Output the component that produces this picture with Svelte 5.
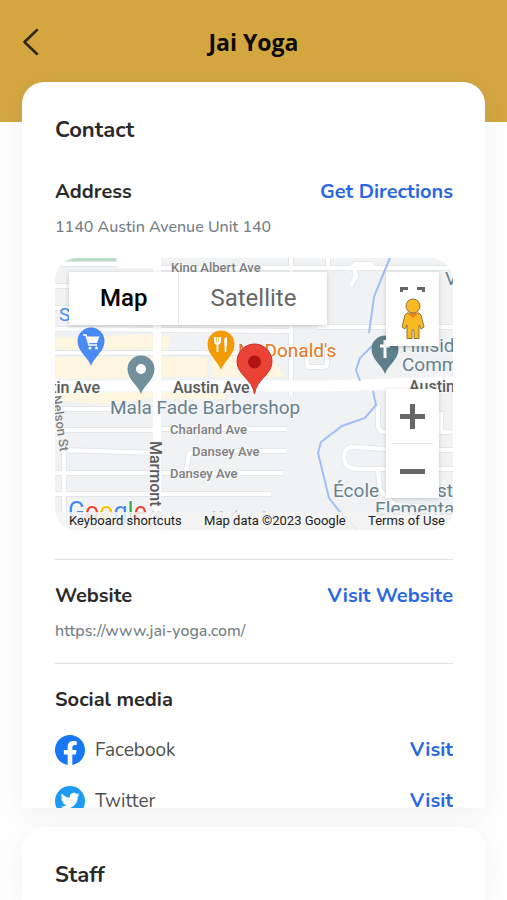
<script>
	const studio = {
		name: 'Jai Yoga',
		address: '1140 Austin Avenue Unit 140',
		website: 'https://www.jai-yoga.com/'
	};

	const socials = [
		{ id: 'facebook', label: 'Facebook', href: '#facebook' },
		{ id: 'twitter', label: 'Twitter', href: '#twitter' }
	];

	let mapType = $state('map');

	// Street geometry, in the map's own 398 x 272 space.
	const streets = [
		'M0 6H62',
		'M98 10H398',
		'M0 28H102',
		'M0 50H102',
		'M0 71L236 73',
		'M0 95H236',
		'M262 69H398',
		'M236 0V138',
		'M273 0V10',
		'M296 10L300 6H316L320 10M299 10L301 18L296 28',
		'M0 151H102',
		'M0 172H102',
		'M6 192L102 195',
		'M0 215H228',
		'M0 236H216',
		'M0 259H9',
		'M9 190V272',
		'M102 171H232',
		'M131 214L134 196L141 193H231',
		'M398 174H330Q323 174 323 166V148',
		'M350 174V156H386V174',
		'M398 211H304Q289 211 289 200Q289 188 300 189L345 192H398',
		'M323 212L325 232L340 247L398 250',
		'M252 92V106Q252 109 256 109H268Q272 109 272 106V91L266 88'
	];

	const blocks = [
		'M0 80L98 76V91H0z',
		'M0 99H98V119L0 121z',
		'M0 135L98 134V140L50 147L0 142z',
		'M106 99H152V119H106z',
		'M157 99H216L230 119H157z',
		'M106 134H170V141H106z',
		'M106 78H116L112 91H106z'
	];

	const river = [
		'M335 0L327 19L319 39L314 75',
		'M318 87L305 100L301 112L305 123',
		'M318 133L321 147L310 160L287 168L266 184L263 195L274 240L285 254L303 272'
	];
</script>

<header class="top-bar">
	<button class="back" type="button" aria-label="Back">
		<svg width="18" height="30" viewBox="0 0 18 30" aria-hidden="true">
			<path d="M15 3L2.5 15L15 27" />
		</svg>
	</button>
	<h1>{studio.name}</h1>
</header>

<main>
	<section class="card contact">
		<h2>Contact</h2>

		<div class="entry first">
			<div class="row">
				<h3>Address</h3>
				<a class="action" href="#directions">Get Directions</a>
			</div>
			<p>{studio.address}</p>

			<div class="map">
				<svg class="canvas" viewBox="0 0 398 272" preserveAspectRatio="xMidYMid slice">
					<rect width="398" height="272" fill="#f0f2f4" />
					<path d="M12 0H61V4H4zM101 0H105V4z" fill="#b9dfc4" />
					<g fill="#fff6e0">
						{#each blocks as d}
							<path {d} />
						{/each}
					</g>

					<g class="edge">
						{#each streets as d}
							<path {d} />
						{/each}
					</g>
					<g class="street">
						{#each streets as d}
							<path {d} />
						{/each}
					</g>
					<path d="M62 0H102V10H62z" fill="#fff" />
					<path d="M102 0V272" stroke="#fff" stroke-width="8" />
					<path d="M0 128L270 128L398 124" fill="none" stroke="#fff" stroke-width="11" />

					<g class="river">
						{#each river as d}
							<path {d} />
						{/each}
					</g>

					<g class="label small">
						<text x="116" y="14">King Albert Ave</text>
						<text x="115" y="176">Charland Ave</text>
						<text x="137" y="198">Dansey Ave</text>
						<text x="115" y="220">Dansey Ave</text>
						<text x="157" y="262" opacity="0.4">Madore Ave</text>
						<text transform="translate(-3 138) rotate(82)">Nelson St</text>
					</g>
					<g class="label main">
						<text x="118" y="135">Austin Ave</text>
						<text x="45" y="135" text-anchor="end">Austin Ave</text>
						<text x="354" y="134">Austin Ave</text>
						<text transform="translate(95 183) rotate(90)">Marmont <tspan opacity="0.4">St</tspan></text>
					</g>
					<g class="label place">
						<text x="55" y="156">Mala Fade Barbershop</text>
						<text x="347" y="94">Hillside</text>
						<text x="347" y="113">Community</text>
						<text x="278" y="239">École</text>
						<text x="398" y="239" text-anchor="end">Crest</text>
						<text x="320" y="257">Elementary</text>
						<text x="390" y="27">Va</text>
						<text x="183" y="99" fill="#e07a1f">McDonald's</text>
						<text x="4" y="63" fill="#4c8df6">S</text>
					</g>

					<!-- grocery -->
					<path d="M36 108C33 99 22.500 94 22.500 83A13.500 13.500 0 0 1 49.500 83C49.500 94 39 99 36 108z" fill="#4a8af4" />
					<path d="M28 77H31L34 87H42" fill="none" stroke="#fff" stroke-width="1.500" />
					<path d="M32 78.500H44.500L42 85H34z" fill="#fff" />
					<circle cx="35" cy="90" r="1.500" fill="#fff" />
					<circle cx="41.500" cy="90" r="1.500" fill="#fff" />

					<!-- barbershop -->
					<path d="M86 136C83 127 72.500 122 72.500 111A13.500 13.500 0 0 1 99.500 111C99.500 122 89 127 86 136z" fill="#71909c" />
					<circle cx="86" cy="111" r="5" fill="#fff" />

					<!-- restaurant -->
					<path d="M166 112C163 103 152.500 97 152.500 86A13.500 13.500 0 0 1 179.500 86C179.500 97 169 103 166 112z" fill="#f29a07" />
					<path d="M160 79V83Q160 86 162.500 86T165 83V79M162.500 79V94M170.500 94V80" fill="none" stroke="#fff" stroke-width="1.800" />
					<path d="M169.500 88V81Q170 79 172 79V88z" fill="#fff" />

					<!-- church -->
					<path d="M330 116C327 107 316.500 102 316.500 91A13.500 13.500 0 0 1 343.500 91C343.500 102 333 107 330 116z" fill="#5f7f8a" />
					<path d="M330 82V100M325 88H335" stroke="#fff" stroke-width="3" />

					<path
						d="M199.500 136C197.500 121 182 117 182 103.500A17.500 17.500 0 0 1 217 103.500C217 117 201.500 121 199.500 136z"
						fill="#ea4335"
						stroke="#c8372b"
					/>
					<circle cx="199.500" cy="104" r="6.500" fill="#b31412" />

					<text class="google" x="13" y="262"
						><tspan fill="#4285f4">G</tspan><tspan fill="#ea4335">o</tspan><tspan fill="#fbbc05">o</tspan><tspan
							fill="#4285f4">g</tspan
						><tspan fill="#34a853">l</tspan><tspan fill="#ea4335">e</tspan></text
					>
				</svg>

				<div class="map-types">
					<button type="button" class:active={mapType === 'map'} onclick={() => (mapType = 'map')}>Map</button>
					<button type="button" class:active={mapType === 'satellite'} onclick={() => (mapType = 'satellite')}>Satellite</button>
				</div>

				<div class="map-tools">
					<div class="tool-box">
						<button class="fullscreen" type="button" aria-label="Toggle fullscreen view">
							<svg width="25" height="5" viewBox="0 0 25 5" aria-hidden="true">
								<path d="M0 0H8V3H3V5H0zM17 0H25V5H22V3H17z" fill="#666" />
							</svg>
						</button>
						<button class="pegman" type="button" aria-label="Street View">
							<svg width="24" height="42" viewBox="0 0 24 42" aria-hidden="true">
								<g fill="#fbb921" stroke="#8c7440" stroke-width="1">
									<path d="M6 15H18L20 17L23 29L20 31L18 27V40.500H13V32H11V40.500H6V27L4 31L1 29L4 17z" />
									<path d="M6 15L12 20L18 15z" fill="#e8861c" stroke="none" />
									<circle cx="12" cy="8" r="7" />
								</g>
							</svg>
						</button>
					</div>
					<div class="tool-box">
						<button class="zoom" type="button" aria-label="Zoom in">
							<svg width="25" height="25" viewBox="0 0 25 25" aria-hidden="true">
								<path d="M0 12.500H25M12.500 0V25" />
							</svg>
						</button>
						<button class="zoom" type="button" aria-label="Zoom out">
							<svg width="25" height="25" viewBox="0 0 25 25" aria-hidden="true">
								<path d="M0 12.500H25" />
							</svg>
						</button>
					</div>
				</div>

				<div class="credits">
					<button type="button">Keyboard shortcuts</button>
					<span>Map data ©2023 Google</span>
					<a href="#terms">Terms of Use</a>
				</div>
			</div>
		</div>

		<div class="entry">
			<div class="row">
				<h3>Website</h3>
				<a class="action" href="#website">Visit Website</a>
			</div>
			<p>{studio.website}</p>
		</div>

		<div class="entry">
			<h3>Social media</h3>
			<ul>
				{#each socials as social (social.id)}
					<li>
						{#if social.id === 'facebook'}
							<svg width="30" height="30" viewBox="0 0 24 24" aria-hidden="true">
								<path
									fill="#1877f2"
									d="M24 12.073c0-6.627-5.373-12-12-12s-12 5.373-12 12c0 5.990 4.388 10.954 10.125 11.854v-8.385H7.078v-3.470h3.047V9.430c0-3.007 1.792-4.669 4.533-4.669 1.312 0 2.686.235 2.686.235v2.953H15.830c-1.491 0-1.956.925-1.956 1.874v2.250h3.328l-.532 3.470h-2.796v8.385C19.612 23.027 24 18.062 24 12.073z"
								/>
							</svg>
						{:else}
							<svg width="30" height="30" viewBox="0 0 30 30" aria-hidden="true">
								<circle cx="15" cy="15" r="15" fill="#1d9bf0" />
								<path
									transform="translate(5.500 5) scale(0.800)"
									fill="#fff"
									d="M23.953 4.570a10 10 0 01-2.825.775 4.958 4.958 0 002.163-2.723c-.951.555-2.005.959-3.127 1.184a4.920 4.920 0 00-8.384 4.482C7.690 8.095 4.067 6.130 1.640 3.162a4.822 4.822 0 00-.666 2.475c0 1.710.870 3.213 2.188 4.096a4.904 4.904 0 01-2.228-.616v.060a4.923 4.923 0 003.946 4.827 4.996 4.996 0 01-2.212.085 4.936 4.936 0 004.604 3.417 9.867 9.867 0 01-6.102 2.105c-.390 0-.779-.023-1.170-.067a13.995 13.995 0 007.557 2.209c9.053 0 13.998-7.496 13.998-13.985 0-.210 0-.420-.015-.630A9.935 9.935 0 0024 4.590z"
								/>
							</svg>
						{/if}
						<span class="network">{social.label}</span>
						<a class="action" href={social.href} aria-label="Visit {social.label}">Visit</a>
					</li>
				{/each}
			</ul>
		</div>
	</section>

	<section class="card staff">
		<h2>Staff</h2>
	</section>
</main>

<style>
	:global(body) {
		background: #fefefe;
		overflow-x: hidden;
	}

	h1,
	h2,
	h3,
	p,
	ul {
		margin: 0;
		padding: 0;
	}

	button {
		margin: 0;
		padding: 0;
		border: 0;
		background: none;
		font: inherit;
		color: inherit;
		cursor: pointer;
	}

	a {
		text-decoration: none;
	}

	.top-bar {
		display: grid;
		grid-template-columns: 32px 1fr 32px;
		align-items: center;
		box-sizing: border-box;
		height: 122px;
		padding: 0 22px 38px;
		background: #d3a640;
		font-family: 'Open Sans', sans-serif;
	}

	.top-bar h1 {
		font-size: 23px;
		line-height: 30px;
		font-weight: 700;
		text-align: center;
		color: #0c0a04;
	}

	.back {
		display: flex;
	}

	.back path {
		fill: none;
		stroke: #2f2715;
		stroke-width: 2.5;
		stroke-linecap: round;
		stroke-linejoin: round;
	}

	main {
		display: flex;
		flex-direction: column;
		gap: 19px;
		margin-top: -40px;
		padding: 0 22px;
		font-family: Nunito, 'Open Sans', sans-serif;
	}

	.card {
		padding: 34px 32px 0 33px;
		background: #fff;
		border-radius: 22px 22px 0 0;
		box-shadow: 0 6px 26px rgb(40 50 90 / 0.06);
	}

	.staff {
		padding-bottom: 11px;
	}

	h2 {
		font-size: 22px;
		line-height: 28px;
		font-weight: 700;
		color: #2a2a2a;
	}

	h3,
	.action {
		font-size: 20px;
		line-height: 28px;
		font-weight: 700;
		color: #2a2a2a;
	}

	.action {
		color: #2a67e2;
	}

	p {
		margin-top: 10px;
		font-size: 16px;
		line-height: 22px;
		font-weight: 500;
		color: #748085;
	}

	.entry {
		padding: 22px 0 21px;
		border-top: 1px solid #e0e0e0;
	}

	.entry.first {
		padding: 34px 0 29px;
		border-top: 0;
	}

	.row {
		display: flex;
		justify-content: space-between;
	}

	/* Map */
	.map {
		position: relative;
		height: 272px;
		margin-top: 20px;
		border-radius: 22px;
		overflow: hidden;
		font-family: Roboto, sans-serif;
	}

	.canvas {
		display: block;
		width: 100%;
		height: 100%;
	}

	.edge path {
		fill: none;
		stroke: #e4e7ea;
		stroke-width: 6;
	}

	.street path {
		fill: none;
		stroke: #fff;
		stroke-width: 4;
	}

	.river path {
		fill: none;
		stroke: #9dc0fa;
		stroke-width: 2;
	}

	.label {
		stroke: #f6f7f8;
		stroke-width: 2;
		paint-order: stroke;
	}

	.small {
		font-size: 13px;
		font-weight: 500;
		fill: #808080;
	}

	.main {
		font-size: 16px;
		font-weight: 500;
		fill: #5a5a5a;
	}

	.place {
		font-size: 19px;
		fill: #67818e;
	}

	.google {
		font-size: 25px;
		stroke: #fff;
		stroke-width: 2;
		paint-order: stroke;
	}

	.map-types {
		position: absolute;
		top: 14px;
		left: 14px;
		display: flex;
		background: #fff;
		box-shadow: 0 1px 4px rgb(0 0 0 / 0.2);
	}

	.map-types button {
		padding: 0 31px;
		font-size: 24px;
		line-height: 53px;
		color: #666;
	}

	.map-types button + button {
		border-left: 1px solid #e8e8e8;
	}

	.map-types .active {
		font-weight: 500;
		color: #000;
	}

	.map-tools {
		position: absolute;
		top: 14px;
		right: 14px;
		display: flex;
		flex-direction: column;
		gap: 43px;
		width: 53px;
	}

	.tool-box {
		display: flex;
		flex-direction: column;
		background: #fff;
		box-shadow: 0 1px 4px rgb(0 0 0 / 0.2);
	}

	.tool-box button {
		display: flex;
		justify-content: center;
	}

	.fullscreen {
		padding-top: 15px;
	}

	.pegman {
		padding: 6px 0;
	}

	.zoom {
		padding: 15px 0 14px;
	}

	.zoom path {
		stroke: #666;
		stroke-width: 5;
	}

	.zoom + .zoom {
		margin: 0 6px;
		border-top: 1px solid #e6e6e6;
	}

	.credits {
		position: absolute;
		right: 0;
		bottom: 0;
		left: 0;
		display: flex;
		justify-content: space-between;
		padding: 0 8px 0 14px;
		background: rgb(245 245 245 / 0.85);
		font-size: 13px;
		line-height: 18px;
		color: #222;
	}

	.credits a {
		color: inherit;
	}

	/* Social list: the second row runs under the card's lower edge */
	.contact .entry:last-child {
		padding-bottom: 0;
	}

	ul {
		display: flex;
		flex-direction: column;
		gap: 21px;
		max-height: 73px;
		margin-top: 21px;
		overflow: hidden;
		list-style: none;
	}

	li {
		display: flex;
		align-items: center;
		gap: 10px;
	}

	li svg {
		flex: none;
	}

	.network {
		flex: 1;
		font-size: 19px;
		line-height: 28px;
		color: #505050;
	}
</style>
